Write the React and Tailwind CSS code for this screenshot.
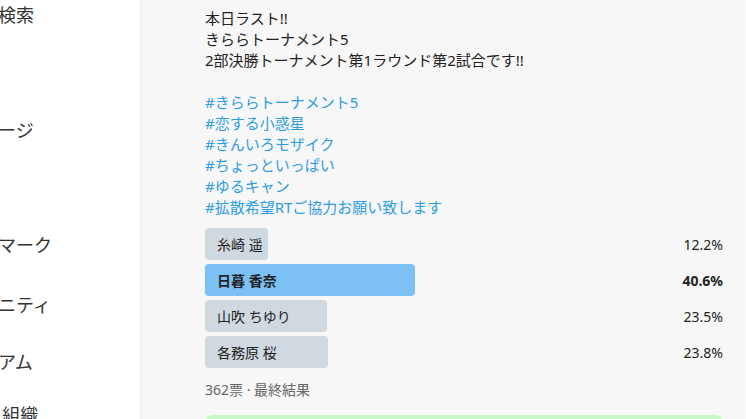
import React from "react";

const navItems = [
  { label: "高度な検索", mt: "mt-[3px]" },
  { label: "マイページ", mt: "mt-[91px]" },
  { label: "ブックマーク", mt: "mt-[91px]" },
  { label: "コミュニティ", mt: "mt-[36px]" },
  { label: "プレミアム", mt: "mt-[33px]" },
  { label: "チーム,組織", mt: "mt-[29px]" },
];

const choices = [
  { name: "糸崎 遥", pct: 12.2 },
  { name: "日暮 香奈", pct: 40.6, win: true },
  { name: "山吹 ちゆり", pct: 23.5 },
  { name: "各務原 桜", pct: 23.8 },
];

const tags = [
  "#きららトーナメント5",
  "#恋する小惑星",
  "#きんいろモザイク",
  "#ちょっといっぱい",
  "#ゆるキャン",
  "#拡散希望RTご協力お願い致します",
];

const App = () => {
  return (
    <div
      className="w-[746px] h-[419px] overflow-hidden flex bg-white text-[#222]"
      style={{ fontFamily: '"Noto Sans", "Noto Sans CJK JP", sans-serif' }}
    >
      <nav className="w-[141px] shrink-0 overflow-hidden flex flex-col border-r border-[#ececec]">
        {navItems.map((item) => (
          <div
            key={item.label}
            className={`${item.mt} ml-[-56px] whitespace-nowrap text-[18px] leading-[24px] text-[#333]`}
          >
            {item.label}
          </div>
        ))}
      </nav>

      <main className="flex-1 bg-[#f7f7f7] pl-[64px] pr-[22px] pt-[8px] border-r border-[#fbfbfb]">
        <div className="text-[15px] leading-[21px]">
          <div>本日ラスト!!</div>
          <div>きららトーナメント5</div>
          <div>2部決勝トーナメント第1ラウンド第2試合です!!</div>
          <div className="h-[21px]" />
          {tags.map((t) => (
            <div key={t} className="text-[#2d9ce3]">
              {t}
            </div>
          ))}
        </div>

        <div className="mt-[10px] flex flex-col gap-[4px]">
          {choices.map((c) => (
            <div key={c.name} className="relative h-[32px] flex items-center text-[14px]">
              <div
                className={`absolute left-0 top-0 h-full rounded-[4px] ${
                  c.win ? "bg-[#7cc1f5]" : "bg-[#d0d9e0]"
                }`}
                style={{ width: `${c.pct}%` }}
              />
              <span className={`relative pl-[12px] whitespace-nowrap ${c.win ? "font-bold" : ""}`}>
                {c.name}
              </span>
              <span className={`relative ml-auto ${c.win ? "font-bold" : ""}`}>{c.pct}%</span>
            </div>
          ))}
        </div>

        <div className="mt-[12px] text-[14px] leading-[20px] text-[#666]">362票 · 最終結果</div>

        <div className="mt-[15px] h-[40px] rounded-[8px] bg-[#c8f7c8]" />
      </main>
    </div>
  );
};

export default App;
